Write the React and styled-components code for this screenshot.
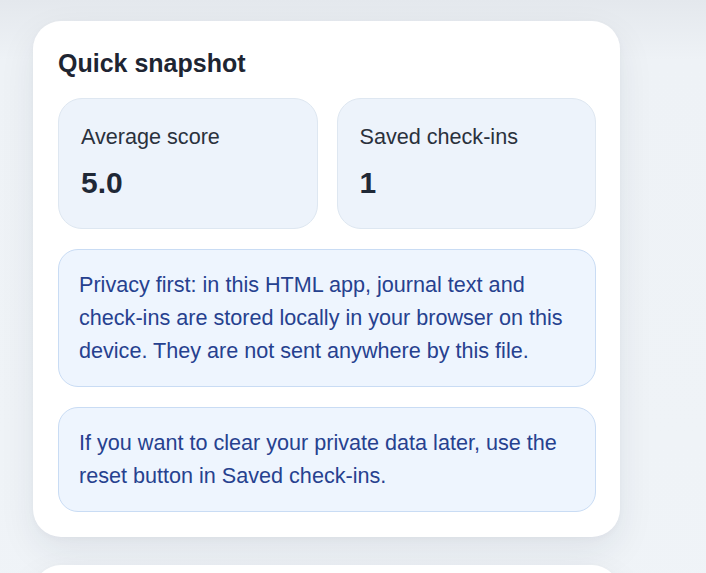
import React from "react";
import styled, { createGlobalStyle } from "styled-components";

const Global = createGlobalStyle`
  html, body { margin: 0; padding: 0; }
  body {
    font-family: "Liberation Sans", Arial, sans-serif;
    background: linear-gradient(180deg, #e4e8ed 0px, #eef2f6 60px, #f0f4f8 100%);
    min-height: 573px;
    overflow: hidden;
  }
`;

const Page = styled.div`
  display: flex;
  flex-direction: column;
  gap: 28px;
  padding: 21px 0 0 33px;
  width: 587px;
`;

const Card = styled.section`
  background: #ffffff;
  border-radius: 28px;
  padding: 27px 24px 25px 25px;
  box-shadow: 0 14px 36px rgba(30, 41, 59, 0.08), 0 2px 6px rgba(30, 41, 59, 0.03);
  display: flex;
  flex-direction: column;
  gap: 20px;
  min-height: ${(p) => p.$minH || 0}px;
`;

const Title = styled.h2`
  margin: 0;
  font-size: 25px;
  font-weight: 700;
  line-height: 30px;
  color: #1e2532;
`;

const Stats = styled.div`
  display: grid;
  grid-template-columns: 1fr 1fr;
  gap: 19px;
`;

const Tile = styled.div`
  background: #edf3fb;
  border: 1px solid #dee7f1;
  border-radius: 24px;
  padding: 25px 22px 26px;
  display: flex;
  flex-direction: column;
  gap: 17px;
  height: 131px;
  box-sizing: border-box;
`;

const Label = styled.div`
  font-size: 21.6px;
  line-height: 25px;
  color: #2a313c;
`;

const Value = styled.div`
  font-size: 30px;
  font-weight: 700;
  line-height: 34px;
  color: #1f2836;
`;

const Note = styled.p`
  margin: 0;
  background: #eef5fe;
  border: 1px solid #c9dcf4;
  border-radius: 20px;
  padding: 18px 20px 19px;
  font-size: 21.6px;
  line-height: 33px;
  color: #26418f;
`;

export default function App() {
  return (
    <>
      <Global />
      <Page>
        <Card>
          <Title>Quick snapshot</Title>
          <Stats>
            <Tile>
              <Label>Average score</Label>
              <Value>5.0</Value>
            </Tile>
            <Tile>
              <Label>Saved check-ins</Label>
              <Value>1</Value>
            </Tile>
          </Stats>
          <Note>
            Privacy first: in this HTML app, journal text and check-ins are stored
            locally in your browser on this device. They are not sent anywhere by
            this file.
          </Note>
          <Note>
            If you want to clear your private data later, use the reset button in
            Saved check-ins.
          </Note>
        </Card>
        <Card $minH={200} />
      </Page>
    </>
  );
}
